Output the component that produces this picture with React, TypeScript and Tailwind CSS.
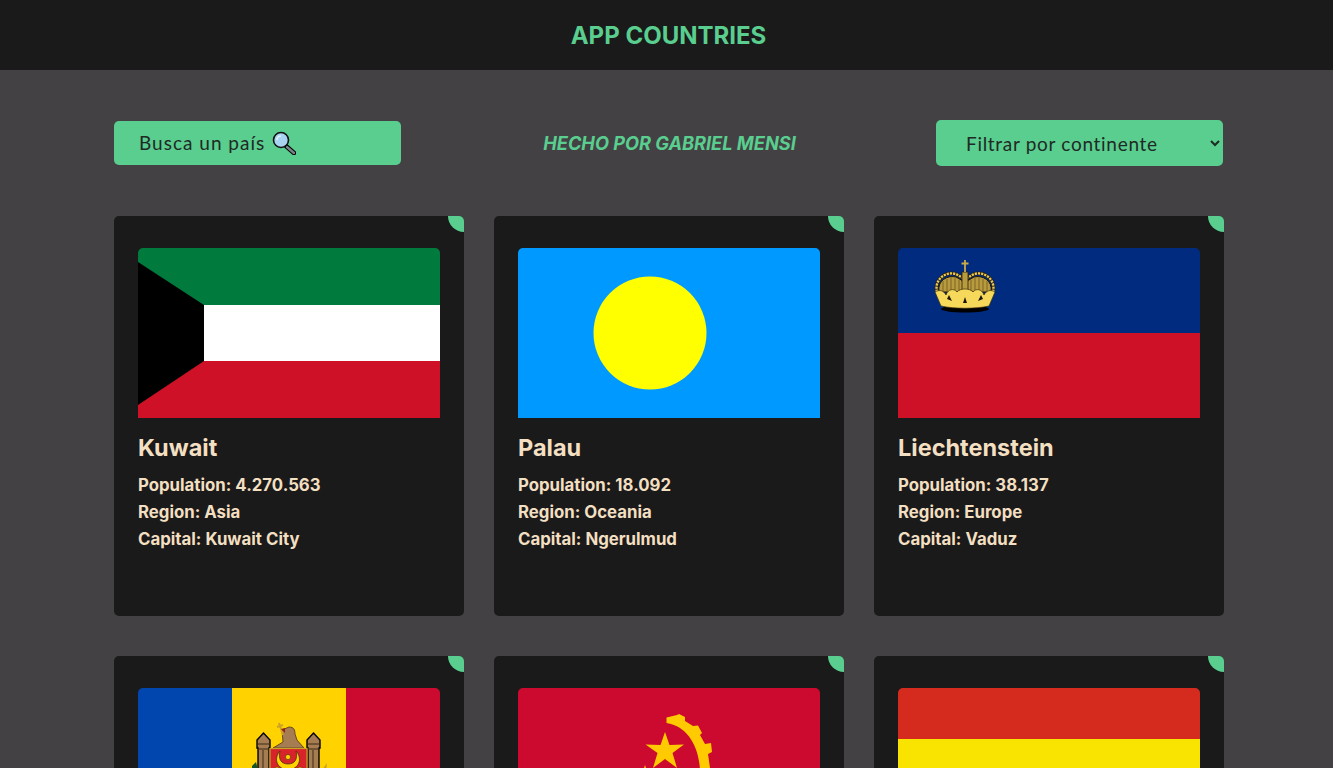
import React from 'react';

const sans = "font-['Inter',sans-serif]";

function Kuwait() {
  return (
    <svg viewBox="0 0 302 170" className="block h-full w-full" preserveAspectRatio="none">
      <rect width="302" height="57" fill="#007a3d" />
      <rect y="57" width="302" height="56" fill="#fff" />
      <rect y="113" width="302" height="57" fill="#ce1126" />
      <path d="M0 14 66 57V113L0 157Z" fill="#000" />
    </svg>
  );
}

function Palau() {
  return (
    <svg viewBox="0 0 302 170" className="block h-full w-full">
      <rect width="302" height="170" fill="#0099ff" />
      <circle cx="132" cy="85" r="56.5" fill="#ffff00" />
    </svg>
  );
}

function Liechtenstein() {
  return (
    <svg viewBox="0 0 302 170" className="block h-full w-full">
      <rect width="302" height="85" fill="#002b7f" />
      <rect y="85" width="302" height="85" fill="#ce1126" />
      {/* crown */}
      <ellipse cx="67" cy="61" rx="24" ry="3.5" fill="#000" />
      <path d="M41 44C39 32 50 27 58 29L65 33V44ZM93 44C95 32 84 27 76 29L69 33V44Z" fill="#b89a3f" stroke="#1b1608" strokeWidth="1" />
      <path d="M45 43V33M49 43V31M53 43V30M57 43V30M61 43V32M73 43V32M77 43V30M81 43V30M85 43V31M89 43V33" stroke="#7d6722" strokeWidth="1" />
      <path d="M39 44C36 31 48 23 58 26L65 30M95 44C98 31 86 23 76 26L69 30" fill="none" stroke="#2a2108" strokeWidth="3.4" />
      <path d="M39 44C36 31 48 23 58 26L65 30M95 44C98 31 86 23 76 26L69 30" fill="none" stroke="#e8c95a" strokeWidth="2.4" strokeDasharray="2.2 1" />
      <rect x="64" y="24" width="6" height="22" fill="#b89a3f" stroke="#2a2108" strokeWidth="0.8" />
      <path d="M67 12V24M63.5 15.5H70.5" stroke="#c9a94a" strokeWidth="1.8" />
      <path d="M37 44C42 41 46 43 48 47 50 41 56 40 59 44 62 40 72 40 75 44 78 40 84 41 86 47 88 43 92 41 97 44L91 58C78 61 56 61 43 58Z" fill="#f6d95b" stroke="#3a2e0a" strokeWidth="0.7" />
      <path d="M51 47 54 53 49 51ZM67 49 69 55 65 55ZM83 47 85 51 80 53Z" fill="#1b1608" />
    </svg>
  );
}

function Moldova() {
  return (
    <svg viewBox="0 0 302 170" className="block h-full w-full">
      <rect width="94" height="170" fill="#0046ae" />
      <rect x="94" width="114" height="170" fill="#ffd200" />
      <rect x="208" width="94" height="170" fill="#cc092f" />
      {/* eagle */}
      <path d="M144 42 151 39C156 39 157 42 157 46L159 52 166 60H135L145 54Z" fill="#a67c52" stroke="#4a3518" strokeWidth="0.8" />
      <path d="M141 35 145 47M139 39 145 37" stroke="#c9a227" strokeWidth="2" />
      <path d="M143 41 147 40 147 45Z" fill="#9c1f1f" />
      {/* towers */}
      <path d="M119 52 125.5 45 132 52V60H131V90H120V60H119Z" fill="#a67c52" stroke="#000" strokeWidth="1.4" />
      <path d="M169 52 175.5 45 182 52V60H181V90H170V60H169Z" fill="#a67c52" stroke="#000" strokeWidth="1.4" />
      <path d="M120 56H132M120 61H131M170 56H181M170 61H181M125 62V90M175 62V90" stroke="#3a2a14" strokeWidth="1" />
      {/* shield */}
      <rect x="132" y="60.5" width="37" height="40" fill="#d8232a" stroke="#c9a227" strokeWidth="1.2" />
      <path d="M142 63C135 71 139 81 150 82 161 81 165 71 158 63 160 71 157 76 150 76 143 76 140 71 142 63Z" fill="#ffd200" stroke="#3a2a14" strokeWidth="0.7" />
      <circle cx="150" cy="69" r="2.6" fill="#ffd200" stroke="#3a2a14" strokeWidth="0.6" />
      <circle cx="139" cy="82" r="3" fill="#ffd200" stroke="#3a2a14" strokeWidth="0.5" />
      <circle cx="162" cy="82" r="3" fill="#ffd200" stroke="#3a2a14" strokeWidth="0.5" />
      <path d="M114 78 118 74 120 82H114Z" fill="#14532d" />
      <path d="M184 82 189 75 188 84Z" fill="#c9a227" />
    </svg>
  );
}

function Angola() {
  return (
    <svg viewBox="0 0 302 170" className="block h-full w-full">
      <rect width="302" height="85" fill="#cc092f" />
      <rect y="85" width="302" height="85" fill="#000" />
      <path d="M147 44 151.5 57 166 56.5 154.5 65 159 80 147 71 135 80 139.5 65 127.5 56.5 142.5 57Z" fill="#ffcb00" />
      {/* gear */}
      <path d="M148.5 29.5 159 27 161 26 167 29 167 33 175 38 180 37.5 184 45 182 47 187 56 193 55 194 64 190 66 192 80V85H182C182 60 170 38 148.5 35Z" fill="#ffcb00" />
      <path d="M127 77 131 90H123Z" fill="#ffcb00" />
    </svg>
  );
}

function RedYellow() {
  return (
    <svg viewBox="0 0 302 170" className="block h-full w-full">
      <rect width="302" height="170" fill="#d52b1e" />
      <rect y="51" width="302" height="119" fill="#f9e300" />
    </svg>
  );
}

type Info = { name: string; population: string; region: string; capital: string };

const firstRow: (Info & { Flag: () => React.ReactElement })[] = [
  { name: 'Kuwait', population: '4.270.563', region: 'Asia', capital: 'Kuwait City', Flag: Kuwait },
  { name: 'Palau', population: '18.092', region: 'Oceania', capital: 'Ngerulmud', Flag: Palau },
  { name: 'Liechtenstein', population: '38.137', region: 'Europe', capital: 'Vaduz', Flag: Liechtenstein },
];

function Card({ info, Flag }: { info?: Info; Flag: () => React.ReactElement }) {
  return (
    <div className="relative h-[400px] overflow-hidden rounded-[5px] bg-[#1a1a1a] px-6 pt-8">
      <div className="absolute right-0 top-0 h-4 w-4 rounded-bl-full bg-[#59ce8f]" />
      <div className="h-[170px] w-[302px] overflow-hidden rounded-t-[5px]">
        <Flag />
      </div>
      {info && (
        <>
          <h2 className={`mt-[15px] text-[23.5px] font-bold leading-[30px] text-[#f3dfc1] ${sans}`}>{info.name}</h2>
          <div className={`mt-[9px] text-[16.8px] font-bold leading-[27px] text-[#f3dfc1] ${sans}`}>
            <p>Population: {info.population}</p>
            <p>Region: {info.region}</p>
            <p>Capital: {info.capital}</p>
          </div>
        </>
      )}
    </div>
  );
}

export default function App() {
  return (
    <div className="h-screen overflow-hidden bg-[#434144]">
      <header className="flex h-[70px] items-center justify-center bg-[#1a1a1a] pl-1 pt-0.5">
        <h1 className={`text-[24px] font-bold text-[#59ce8f] ${sans}`}>APP COUNTRIES</h1>
      </header>

      <main className="ml-[114px] w-[1110px]">
        {/* Search, credit and filter */}
        <div className="flex h-[146px] items-center justify-between pr-px">
          <div className="flex h-11 w-[287px] items-center gap-[7px] rounded-[5px] bg-[#59ce8f] pl-[25px]">
            <span className="font-['Lato',sans-serif] text-[19px] tracking-[1px] text-[#1f2a24]">Busca un país</span>
            <svg width="24" height="24" viewBox="0 0 24 24">
              <path d="M14 15 22 22" stroke="#000" strokeWidth="4.5" strokeLinecap="round" />
              <path d="M15 16 22 22" stroke="#7b8288" strokeWidth="2.4" strokeLinecap="round" />
              <circle cx="9" cy="9" r="7.5" fill="#a8d4f2" stroke="#111" strokeWidth="1.6" />
              <path d="M5 9A4 4 0 0 1 9 5" stroke="#e3f3fd" strokeWidth="1.6" fill="none" />
            </svg>
          </div>
          <p className={`pl-0.5 pt-0.5 text-[18.2px] font-bold italic text-[#59ce8f] ${sans}`}>HECHO POR GABRIEL MENSI</p>
          <select className="h-[46px] w-[287px] rounded-[5px] bg-[#59ce8f] pl-[26px] font-['Lato',sans-serif] text-[19px] tracking-[0.7px] text-[#1f2a24]">
            <option>Filtrar por continente</option>
          </select>
        </div>

        {/* Country cards */}
        <div className="grid grid-cols-[repeat(3,350px)] gap-x-[30px] gap-y-10">
          {firstRow.map((c) => (
            <Card key={c.name} info={c} Flag={c.Flag} />
          ))}
          <Card Flag={Moldova} />
          <Card Flag={Angola} />
          <Card Flag={RedYellow} />
        </div>
      </main>
    </div>
  );
}
